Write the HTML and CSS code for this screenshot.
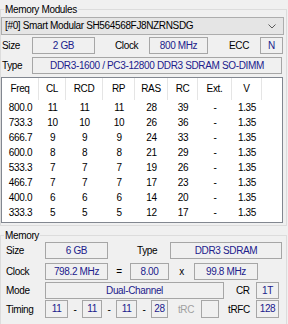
FILE: index.html
```html
<!DOCTYPE html>
<html>
<head>
<meta charset="utf-8">
<link rel="stylesheet" href="styles.css">
</head>
<body>
<fieldset class="grp top">
  <legend>Memory Modules</legend>
  <div class="combo">
    <span class="combo-text">[#0] Smart Modular SH564568FJ8NZRNSDG</span>
    <svg class="chev" width="8" height="5" viewBox="0 0 8 5"><path d="M0.5 0.5 L4 4 L7.5 0.5" fill="none" stroke="#5a5a5a" stroke-width="1"/></svg>
  </div>
  <div class="row r-size">
    <span class="lbl l-size">Size</span>
    <span class="box b-size">2 GB</span>
    <span class="lbl l-clock">Clock</span>
    <span class="box b-clock">800 MHz</span>
    <span class="lbl l-ecc">ECC</span>
    <span class="box b-ecc">N</span>
  </div>
  <div class="row r-type">
    <span class="lbl l-size">Type</span>
    <span class="box b-type">DDR3-1600 / PC3-12800 DDR3 SDRAM SO-DIMM</span>
  </div>
  <div class="list">
    <div class="lrow head">
      <span>Freq</span><span>CL</span><span>RCD</span><span>RP</span><span>RAS</span><span>RC</span><span>Ext.</span><span>V</span><span></span>
    </div>
    <div class="lrow"><span>800.0</span><span>11</span><span>11</span><span>11</span><span>28</span><span>39</span><span>-</span><span>1.35</span><span></span></div>
    <div class="lrow"><span>733.3</span><span>10</span><span>10</span><span>10</span><span>26</span><span>36</span><span>-</span><span>1.35</span><span></span></div>
    <div class="lrow"><span>666.7</span><span>9</span><span>9</span><span>9</span><span>24</span><span>33</span><span>-</span><span>1.35</span><span></span></div>
    <div class="lrow"><span>600.0</span><span>8</span><span>8</span><span>8</span><span>21</span><span>29</span><span>-</span><span>1.35</span><span></span></div>
    <div class="lrow"><span>533.3</span><span>7</span><span>7</span><span>7</span><span>19</span><span>26</span><span>-</span><span>1.35</span><span></span></div>
    <div class="lrow"><span>466.7</span><span>7</span><span>7</span><span>7</span><span>17</span><span>23</span><span>-</span><span>1.35</span><span></span></div>
    <div class="lrow"><span>400.0</span><span>6</span><span>6</span><span>6</span><span>14</span><span>20</span><span>-</span><span>1.35</span><span></span></div>
    <div class="lrow"><span>333.3</span><span>5</span><span>5</span><span>5</span><span>12</span><span>17</span><span>-</span><span>1.35</span><span></span></div>
  </div>
</fieldset>
<fieldset class="grp mem">
  <legend>Memory</legend>
  <div class="mrow m1">
    <span class="mlbl ml-first">Size</span>
    <span class="box mb-size">6 GB</span>
    <span class="mlbl ml-type">Type</span>
    <span class="box mb-type">DDR3 SDRAM</span>
  </div>
  <div class="mrow m2">
    <span class="mlbl ml-first">Clock</span>
    <span class="box mb-size">798.2 MHz</span>
    <span class="mlbl ml-eq">=</span>
    <span class="box mb-mult">8.00</span>
    <span class="mlbl ml-x">x</span>
    <span class="box mb-bus">99.8 MHz</span>
  </div>
  <div class="mrow m3">
    <span class="mlbl ml-first">Mode</span>
    <span class="box mb-mode">Dual-Channel</span>
    <span class="mlbl ml-cr">CR</span>
    <span class="box mb-cr">1T</span>
  </div>
  <div class="mrow m4">
    <span class="mlbl ml-first">Timing</span>
    <span class="box mt1">11</span>
    <span class="mlbl ml-dash">-</span>
    <span class="box mt2">11</span>
    <span class="mlbl ml-dash">-</span>
    <span class="box mt3">11</span>
    <span class="mlbl ml-dash">-</span>
    <span class="box mt4">28</span>
    <span class="mlbl ml-trc">tRC</span>
    <span class="box mt5"></span>
    <span class="mlbl ml-trfc">tRFC</span>
    <span class="box mb-cr">128</span>
  </div>
</fieldset>
</body>
</html>
```

FILE: styles.css
```css
* { box-sizing: border-box; }
html, body { margin: 0; padding: 0; }
body {
  width: 288px;
  height: 324px;
  overflow: hidden;
  background: #f0f0f0;
  font-family: "Liberation Sans", Arial, sans-serif;
  font-size: 10px;
  letter-spacing: -0.35px;
  color: #000;
}
.grp {
  margin: 0;
  padding: 0;
  border: 1px solid #dcdcdc;
  width: 287px;
  min-width: 0;
}
.grp legend {
  padding: 0 1px;
  margin-left: 3px;
  line-height: 13px;
  height: 13px;
}
.top { margin-top: 3px; padding-bottom: 2px; }
.mem { margin-top: 3px; height: 96px; }

.combo {
  margin-top: 1px;
  width: 283px;
  height: 18px;
  background: #e5e5e5;
  border: 1px solid #adadad;
  display: flex;
  align-items: center;
  justify-content: space-between;
  padding: 0 7px 0 3px;
}
.combo-text { line-height: 16px; }
.chev { display: block; }

.row {
  display: flex;
  align-items: center;
  height: 17px;
}
.r-size { margin-top: 2px; }
.r-type { margin-top: 3px; }
.lbl { display: block; line-height: 17px; }
.l-size { width: 31px; padding-left: 1px; }
.l-clock { width: 54px; padding-left: 20px; }
.l-ecc { width: 52px; padding-left: 21px; }

.box {
  display: block;
  height: 17px;
  line-height: 15px;
  border: 1px solid #a6a6a6;
  background: #f0f0f0;
  color: #20208c;
  text-align: center;
  white-space: nowrap;
  overflow: hidden;
}
.b-size { width: 63px; }
.b-clock { width: 59px; }
.b-ecc { width: 23px; }
.b-type { width: 250px; }

.list {
  margin-top: 3px;
  width: 282px;
  height: 146px;
  background: #fff;
  border: 1px solid #828790;
}
.lrow {
  display: grid;
  grid-template-columns: 37px 27px 37px 32px 33px 30px 34px 30px 1fr;
  height: 15px;
  line-height: 15px;
}
.lrow span { text-align: center; white-space: nowrap; }
.head { height: 22px; line-height: 21px; }
.head span { border-right: 1px solid #e5e5e5; }
.head span:last-child { border-right: 0; }

.mrow {
  display: flex;
  align-items: center;
  height: 17px;
}
.m1 { margin-top: 0; }
.m2 { margin-top: 4px; }
.m3 { margin-top: 2px; }
.m4 { margin-top: 1px; height: 18px; }
.m4 .box { height: 18px; line-height: 16px; }
.mlbl { display: block; line-height: 17px; text-align: center; }
.ml-first { width: 44px; padding-left: 5px; text-align: left; }
.ml-type { width: 62px; padding-left: 29px; text-align: left; }
.ml-eq { width: 22px; }
.ml-x { width: 25px; }
.ml-cr { width: 32px; padding-left: 12px; text-align: left; }
.ml-dash { width: 14px; }
.ml-trc { width: 33px; color: #a0a0a0; padding-left: 3px; }
.ml-trfc { width: 37px; padding-left: 3px; }
.mb-size { width: 63px; }
.mb-type { width: 112px; }
.mb-mult { width: 39px; }
.mb-bus { width: 64px; }
.mb-mode { width: 179px; }
.mb-cr { width: 23px; }
.mt1 { width: 23px; }
.mt2 { width: 20px; }
.mt3 { width: 21px; }
.mt4 { width: 17px; }
.mt5 { width: 18px; }
```
